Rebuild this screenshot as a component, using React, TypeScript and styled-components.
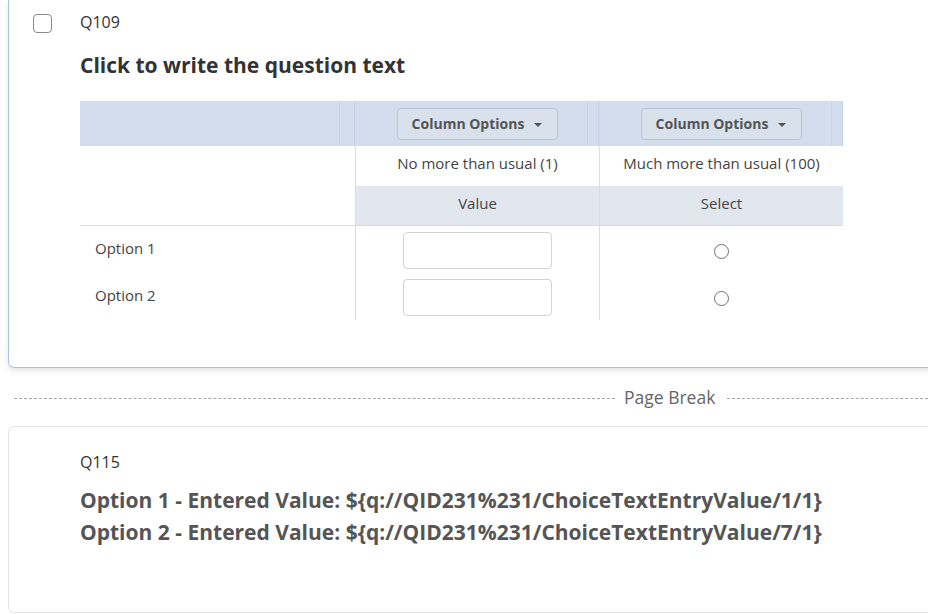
import React from 'react';
import styled, { createGlobalStyle } from 'styled-components';

const GlobalStyle = createGlobalStyle`
  html, body {
    margin: 0;
    padding: 0;
    background: #ffffff;
    overflow: hidden;
  }
  body {
    font-family: "Open Sans", "Liberation Sans", sans-serif;
    color: #333;
  }
`;

const Page = styled.div`
  width: 928px;
  height: 614px;
  padding-left: 8px;
  box-sizing: border-box;
  overflow: hidden;
`;

const QuestionCard = styled.div`
  width: 940px;
  box-sizing: border-box;
  border: 1px solid #a3c5ea;
  border-top: none;
  border-radius: 0 0 6px 6px;
  box-shadow: 0 3px 6px rgba(0, 0, 0, 0.1);
  display: grid;
  grid-template-columns: 71px 1fr;
  padding: 12px 0 47px;
`;

const SelectBox = styled.div`
  width: 17px;
  height: 17px;
  margin: 2px 0 0 24px;
  border: 1.5px solid #8a8a8a;
  border-radius: 4px;
  background: #fff;
`;

const QuestionBody = styled.div`
  display: flex;
  flex-direction: column;
`;

const QuestionId = styled.div`
  font-size: 16px;
  line-height: 20px;
  color: #333;
`;

const QuestionTitle = styled.div`
  font-size: 21px;
  font-weight: 700;
  line-height: 26px;
  color: #333;
  margin: 20px 0 23px;
`;

const Matrix = styled.div`
  display: grid;
  width: 763px;
  grid-template-columns: 275px 244px 244px;
`;

const HeadCell = styled.div<{ $first?: boolean }>`
  height: 45px;
  background: #d2deed;
  display: flex;
  align-items: center;
  justify-content: center;
  background-image: linear-gradient(to right, transparent calc(100% - ${p => (p.$first ? 16 : 12)}px), #c8d5e6 calc(100% - ${p => (p.$first ? 16 : 12)}px), #c8d5e6 calc(100% - ${p => (p.$first ? 15 : 11)}px), transparent calc(100% - ${p => (p.$first ? 15 : 11)}px), transparent calc(100% - 1px), #c3d0e1 calc(100% - 1px));
`;

const ColumnButton = styled.div`
  width: 161px;
  height: 32px;
  box-sizing: border-box;
  border: 1px solid #b8c4d2;
  border-radius: 4px;
  background: #d8e1ec;
  display: flex;
  align-items: center;
  justify-content: center;
  gap: 10px;
  font-size: 14px;
  font-weight: 700;
  color: #555;
`;

const Caret = styled.span`
  width: 0;
  height: 0;
  border-left: 4px solid transparent;
  border-right: 4px solid transparent;
  border-top: 4px solid #555;
  margin-top: 2px;
`;

const LabelCell = styled.div<{ $divider?: boolean; $tinted?: boolean }>`
  height: 40px;
  display: flex;
  align-items: center;
  justify-content: center;
  padding-bottom: ${p => (p.$tinted ? 5 : 6)}px;
  font-size: 15px;
  color: #444;
  background: ${p => (p.$tinted ? '#e2e6ef' : '#fff')};
  border-left: ${p => (p.$divider ? '1px solid #dcdcdc' : 'none')};
  border-bottom: ${p => (p.$tinted ? '1px solid #dcdcdc' : 'none')};
  box-sizing: border-box;
`;

const BlankCell = styled.div<{ $bottom?: boolean }>`
  height: 40px;
  border-bottom: ${p => (p.$bottom ? '1px solid #dcdcdc' : 'none')};
  box-sizing: border-box;
`;

const RowLabel = styled.div`
  height: 47px;
  display: flex;
  align-items: center;
  padding-left: 15px;
  padding-bottom: 4px;
  box-sizing: border-box;
  font-size: 15px;
  color: #444;
`;

const AnswerCell = styled.div`
  height: 47px;
  display: flex;
  align-items: center;
  justify-content: center;
  border-left: 1px solid #dcdcdc;
`;

const TextBox = styled.div`
  width: 149px;
  height: 37px;
  box-sizing: border-box;
  border: 1px solid #d3d3d3;
  border-radius: 4px;
  background: #fff;
  margin-top: 1px;
`;

const Radio = styled.div`
  width: 15px;
  height: 15px;
  box-sizing: border-box;
  border: 1.5px solid #6f6f6f;
  border-radius: 50%;
  margin-top: 4px;
`;

const PageBreak = styled.div`
  display: flex;
  align-items: center;
  height: 28px;
  margin: 15px 0 15px 6px;
  font-size: 17.5px;
  color: #666;
`;

const Dashes = styled.div`
  flex: 1;
  margin-left: 12px;
  border-top: 1px dashed #a8a8a8;
  margin-top: 3px;
`;

const BreakLine = styled(Dashes)`
  flex: 0 0 601px;
  margin-left: 0;
  margin-right: 9px;
`;

const PlainCard = styled.div`
  width: 940px;
  height: 187px;
  box-sizing: border-box;
  border: 1px solid #e4e4e4;
  border-radius: 6px;
  padding: 25px 0 0 71px;
`;

const EntryText = styled.div`
  font-size: 21px;
  font-weight: 700;
  line-height: 32px;
  color: #555;
  margin-top: 12px;
`;

const rows = ['Option 1', 'Option 2'];

export default function App() {
  return (
    <Page>
      <GlobalStyle />
      <QuestionCard>
        <SelectBox />
        <QuestionBody>
          <QuestionId>Q109</QuestionId>
          <QuestionTitle>Click to write the question text</QuestionTitle>
          <Matrix>
            <HeadCell $first />
            <HeadCell>
              <ColumnButton>Column Options <Caret /></ColumnButton>
            </HeadCell>
            <HeadCell>
              <ColumnButton>Column Options <Caret /></ColumnButton>
            </HeadCell>

            <BlankCell />
            <LabelCell $divider>No more than usual (1)</LabelCell>
            <LabelCell $divider>Much more than usual (100)</LabelCell>

            <BlankCell $bottom />
            <LabelCell $divider $tinted>Value</LabelCell>
            <LabelCell $divider $tinted>Select</LabelCell>

            {rows.map(r => (
              <React.Fragment key={r}>
                <RowLabel>{r}</RowLabel>
                <AnswerCell><TextBox /></AnswerCell>
                <AnswerCell><Radio /></AnswerCell>
              </React.Fragment>
            ))}
          </Matrix>
        </QuestionBody>
      </QuestionCard>

      <PageBreak>
        <BreakLine />
        Page Break
        <Dashes />
      </PageBreak>

      <PlainCard>
        <QuestionId>Q115</QuestionId>
        <EntryText>
          Option 1 - Entered Value: ${'{'}q://QID231%231/ChoiceTextEntryValue/1/1{'}'}
          <br />
          Option 2 - Entered Value: ${'{'}q://QID231%231/ChoiceTextEntryValue/7/1{'}'}
        </EntryText>
      </PlainCard>
    </Page>
  );
}
